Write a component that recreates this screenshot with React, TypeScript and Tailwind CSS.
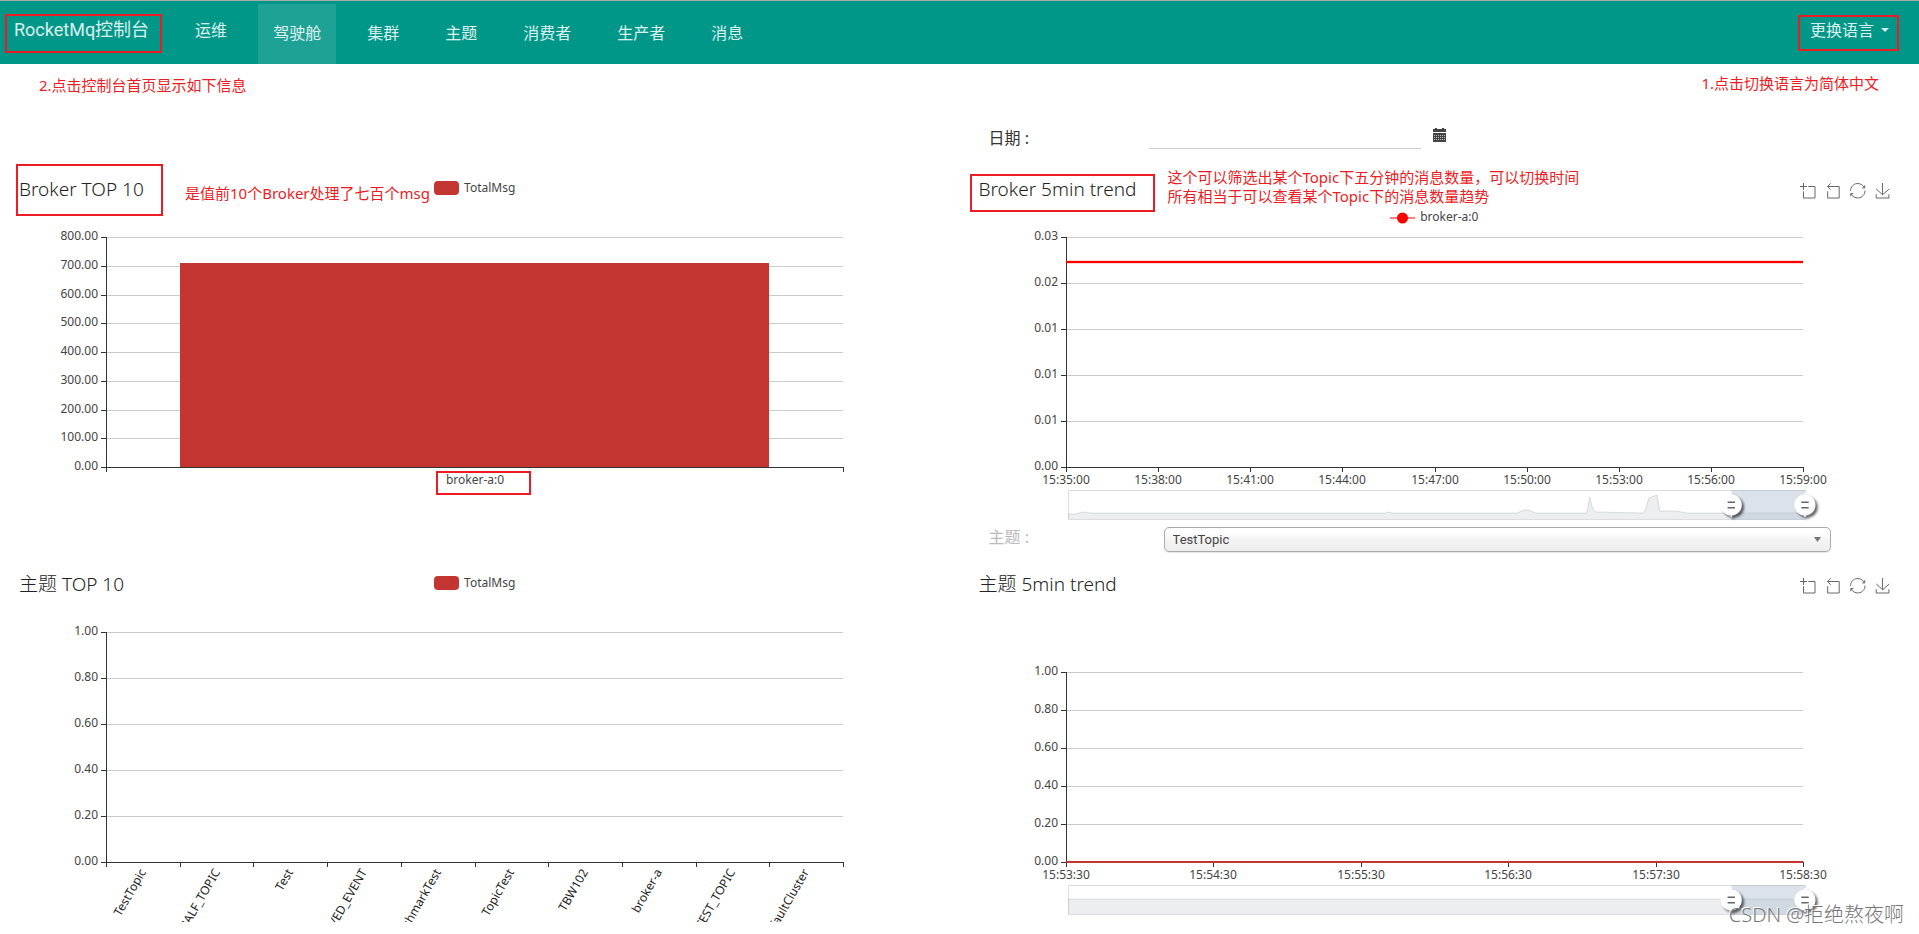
import React, { useLayoutEffect, useRef, useState } from "react";
import clsx from "clsx";

type Tick = { label: string; at: number };

type ChartProps = {
  title: string;
  legend?: React.ReactNode;
  legendLow?: boolean;
  toolbox?: boolean;
  yLabels: string[];
  xTicks: Tick[];
  top?: number;
  rotate?: boolean;
  tickMarks?: number[];
  bar?: { from: number; to: number; value: number };
  line?: { value: number; color: string; halo?: boolean };
  zoom?: number[][];
  children?: React.ReactNode;
};

const navItems = ["驾驶舱", "集群", "主题", "消费者", "生产者", "消息"];

const topics = [
  "TestTopic",
  "RMQ_SYS_TRANS_HALF_TOPIC",
  "Test",
  "OFFSET_MOVED_EVENT",
  "BenchmarkTest",
  "TopicTest",
  "TBW102",
  "broker-a",
  "SELF_TEST_TOPIC",
  "DefaultCluster",
];

const brokerTimes = [
  "15:35:00",
  "15:38:00",
  "15:41:00",
  "15:44:00",
  "15:47:00",
  "15:50:00",
  "15:53:00",
  "15:56:00",
  "15:59:00",
];

const topicTimes = [
  "15:53:30",
  "15:54:30",
  "15:55:30",
  "15:56:30",
  "15:57:30",
  "15:58:30",
];

// [position along the slider, height in px]
const brokerShadow = [
  [0, 5],
  [0.01, 5],
  [0.02, 7],
  [0.03, 6],
  [0.43, 6],
  [0.435, 7],
  [0.44, 6],
  [0.61, 6],
  [0.618, 9],
  [0.625, 9],
  [0.634, 6],
  [0.704, 6],
  [0.708, 22],
  [0.712, 10],
  [0.716, 7],
  [0.78, 6],
  [0.783, 8],
  [0.788, 21],
  [0.799, 24],
  [0.803, 8],
  [0.825, 8],
  [0.84, 6],
  [1, 6],
];

const topicShadow = [
  [0, 15],
  [1, 15],
];

const toolIcons = [
  {
    name: "区域缩放",
    d: "M0,13.5h26.9 M13.5,26.9V0 M32.1,13.5H58V58H13.5 V32.1",
  },
  {
    name: "区域缩放还原",
    d: "M22,1.4L9.9,13.5l12.3,12.3 M10.3,13.5H54.9v44.6 H10.3v-26",
  },
  {
    name: "还原",
    d: "M47,18.9h9.8V8.7 M56.3,20.1 C52.1,9,40.5,0.6,26.8,2.1C12.6,3.7,1.6,16.2,2.1,30.6 M13,41.1H3.1v10.2 M3.7,39.9c4.2,11.1,15.8,19.5,29.5,18 c14.2-1.6,25.2-14.1,24.7-28.5",
  },
  {
    name: "保存为图片",
    d: "M4.7,22.9L29.3,45.5L54.7,23.4M4.6,43.6L4.6,58L53.8,58L53.8,43.6M29.2,45.1L29.2,0",
  },
];

const spread = (labels: string[]): Tick[] =>
  labels.map((label, i) => ({ label, at: i / (labels.length - 1) }));

function useWidth() {
  const ref = useRef<HTMLDivElement>(null);
  const [width, setWidth] = useState(921);

  useLayoutEffect(() => {
    const el = ref.current;
    if (!el) return;
    const update = () => setWidth(Math.round(el.clientWidth));
    update();
    const observer = new ResizeObserver(update);
    observer.observe(el);
    return () => observer.disconnect();
  }, []);

  return { ref, width };
}

function Note({
  className,
  children,
}: {
  className?: string;
  children: React.ReactNode;
}) {
  return (
    <p
      className={clsx(
        "text-[15px] leading-[19px] whitespace-nowrap text-[#ed1c24]",
        className
      )}
    >
      {children}
    </p>
  );
}

function Frame({ className }: { className: string }) {
  return (
    <div
      className={clsx(
        "pointer-events-none absolute border-2 border-[#ed1c24]",
        className
      )}
    />
  );
}

function BarLegend() {
  return (
    <div className="flex items-center gap-[5px]">
      <span className="h-[14px] w-[25px] rounded-[4px] bg-[#c23531]" />
      <span className="text-xs leading-[14px] text-[#444]">TotalMsg</span>
    </div>
  );
}

function LineLegend() {
  return (
    <div className="flex items-center gap-[5px]">
      <svg width="25" height="14" viewBox="0 0 25 14">
        <path d="M0 8h25" stroke="#ff0000" strokeOpacity="0.5" strokeWidth="2" />
        <circle cx="12.5" cy="8" r="5.5" fill="#ff0000" />
      </svg>
      <span className="text-xs leading-[14px] text-[#444]">broker-a:0</span>
    </div>
  );
}

function ZoomHandle({ x, y }: { x: number; y: number }) {
  return (
    <g
      transform={`translate(${x} ${y}) scale(1.12) translate(-10 -21.3)`}
      className="drop-shadow-[2px_2px_1px_rgba(0,0,0,0.6)]"
    >
      <path
        d="M10.7,11.9v-1.3H9.3v1.3c-4.9,0.3-8.8,4.4-8.8,9.4c0,5,3.9,9.1,8.8,9.4v1.3h1.3v-1.3c4.9-0.3,8.8-4.4,8.8-9.4C19.5,16.3,15.6,12.2,10.7,11.9z"
        fill="#fff"
      />
      <path
        d="M13.3,24.4H6.7V23h6.6V24.4z M13.3,19.6H6.7v-1.4h6.6V19.6z"
        fill="#666"
      />
    </g>
  );
}

function DataZoom({
  left,
  width,
  shadow,
}: {
  left: number;
  width: number;
  shadow: number[][];
}) {
  const top = 263;
  const height = 29;
  const bottom = top + height;
  const start = left + width * 0.9;
  const outline = shadow
    .map(([at, h]) => `${left + at * width},${bottom - h}`)
    .join(" ");

  return (
    <g>
      <rect
        x={left + 0.5}
        y={top + 0.5}
        width={width}
        height={height}
        fill="#fff"
        stroke="#ddd"
      />
      <polygon
        points={`${left},${bottom} ${outline} ${left + width},${bottom}`}
        fill="#2f4554"
        fillOpacity="0.09"
      />
      <polyline
        points={outline}
        fill="none"
        stroke="#2f4554"
        strokeOpacity="0.15"
      />
      <rect
        x={start}
        y={top}
        width={width * 0.1}
        height={height + 1}
        fill="#a7b7cc"
        fillOpacity="0.4"
      />
      <ZoomHandle x={start} y={top + 15} />
      <ZoomHandle x={left + width} y={top + 15} />
    </g>
  );
}

function Chart({
  title,
  legend,
  legendLow,
  toolbox,
  yLabels,
  xTicks,
  top = 10,
  rotate,
  tickMarks,
  bar,
  line,
  zoom,
  children,
}: ChartProps) {
  const { ref, width } = useWidth();
  const left = Math.round(width * 0.1);
  const plotWidth = Math.floor(width * 0.8);
  const bottom = 240;
  const xOf = (at: number) => Math.round(left + at * plotWidth);
  const yOf = (v: number) => Math.round(bottom - v * (bottom - top));
  const marks = tickMarks ?? xTicks.map((t) => t.at);

  return (
    <section className="relative mr-6 ml-[14px] min-w-0">
      <header className="grid h-[50px] grid-cols-[1fr_auto_1fr] items-start px-[5px]">
        <h2 className="text-[19px] leading-6 font-light text-[#222]">{title}</h2>
        <div className={legendLow ? "pt-[33px]" : "pt-1"}>{legend}</div>
        {toolbox && (
          <div className="flex justify-end gap-[10px] pt-[6px]">
            {toolIcons.map((icon) => (
              <button key={icon.name} type="button" aria-label={icon.name}>
                <svg
                  className="size-[15px] overflow-visible"
                  viewBox="0 0 58 58"
                  fill="none"
                  stroke="#666"
                >
                  <path d={icon.d} vectorEffect="non-scaling-stroke" />
                </svg>
              </button>
            ))}
          </div>
        )}
      </header>
      <div ref={ref}>
        <svg
          width={width}
          height="300"
          className={clsx("block", !rotate && "overflow-visible")}
          role="img"
          aria-label={title}
        >
          {yLabels.map((label, i) => {
            const y = yOf(i / (yLabels.length - 1));
            return (
              <g key={i}>
                <rect x={left} y={y} width={plotWidth} height="1" fill="#ccc" />
                <rect x={left - 5} y={y} width="5" height="1" fill="#333" />
                <text
                  x={left - 8}
                  y={y + 3}
                  textAnchor="end"
                  className="fill-[#444] text-xs"
                >
                  {label}
                </text>
              </g>
            );
          })}
          {bar && (
            <rect
              x={xOf(bar.from)}
              y={yOf(bar.value)}
              width={xOf(bar.to) - xOf(bar.from)}
              height={bottom - yOf(bar.value)}
              fill="#c23531"
            />
          )}
          <rect x={left} y={bottom} width={plotWidth} height="1" fill="#333" />
          <rect x={left} y={top} width="1" height={bottom - top} fill="#333" />
          {marks.map((at) => (
            <rect
              key={at}
              x={xOf(at)}
              y={bottom}
              width="1"
              height="5"
              fill="#333"
            />
          ))}
          {xTicks.map((tick) =>
            rotate ? (
              <text
                key={tick.label}
                transform={`translate(${xOf(tick.at)} ${bottom + 8}) rotate(-60)`}
                y="4"
                textAnchor="end"
                className="fill-[#222] text-xs"
              >
                {tick.label}
              </text>
            ) : (
              <text
                key={tick.label}
                x={xOf(tick.at)}
                y={bottom + 17}
                textAnchor="middle"
                className="fill-[#444] text-xs"
              >
                {tick.label}
              </text>
            )
          )}
          {line && (
            <path
              d={`M${left} ${yOf(line.value)}h${plotWidth}`}
              stroke={line.color}
              strokeWidth="2"
            />
          )}
          {line?.halo && (
            <path
              d={`M${left} ${yOf(line.value)}h${plotWidth}`}
              stroke={line.color}
              strokeOpacity="0.3"
              strokeWidth="3"
            />
          )}
          {zoom && <DataZoom left={left + 2} width={plotWidth} shadow={zoom} />}
        </svg>
      </div>
      {children}
    </section>
  );
}

function Header() {
  return (
    <header className="relative flex h-16 items-start border-t border-[#aaa] bg-[#009688] text-base text-white/85">
      <a
        href="#/"
        className="ml-[14px] flex h-[58px] items-center font-['Roboto','Noto_Sans_CJK_SC',sans-serif] text-lg"
      >
        RocketMq控制台
      </a>
      <a href="#/ops" className="ml-[31px] flex h-[58px] items-center px-[15px]">
        运维
      </a>
      <nav className="ml-4 flex gap-4 self-end">
        {navItems.map((item, i) => (
          <a
            key={item}
            href={`#/${item}`}
            className={clsx(
              "flex h-[60px] items-center px-[15px] pb-[2px]",
              i === 0 && "bg-white/12"
            )}
          >
            {item}
          </a>
        ))}
      </nav>
      <button
        type="button"
        className="mr-[30px] ml-auto flex h-[58px] items-center gap-[7px]"
      >
        更换语言
        <svg width="8" height="4" viewBox="0 0 8 4" fill="currentColor">
          <path d="M0 0h8L4 4z" />
        </svg>
      </button>
      <Frame className="top-[13px] left-[5px] h-[39px] w-[157px]" />
      <Frame className="top-[14px] right-[20px] h-[36px] w-[101px]" />
    </header>
  );
}

function CalendarIcon() {
  return (
    <svg width="13" height="14" viewBox="0 0 13 14" fill="#444">
      <path d="M0 1h2V0h2v1h5V0h2v1h2v3H0z" />
      <path d="M0 5h13v9H0z" />
      <path
        d="M1 7.5h11M1 9.5h11M1 11.5h11"
        stroke="#bbb"
        strokeDasharray="1 1"
        strokeWidth="1"
      />
    </svg>
  );
}

export default function App() {
  const [date, setDate] = useState("");
  const [topic, setTopic] = useState("TestTopic");

  return (
    <div className="bg-white font-['Noto_Sans','Noto_Sans_CJK_SC',sans-serif]">
      <Header />
      <main className="relative grid grid-cols-2 pb-3">
        <div className="h-[113px] pt-3 pl-[39px]">
          <Note>2.点击控制台首页显示如下信息</Note>
        </div>
        <div className="relative flex h-[113px] items-start pt-[61px] pl-[29px]">
          <label
            htmlFor="date"
            className="w-[160px] text-base leading-[26px] text-[#333]"
          >
            日期 :
          </label>
          <input
            id="date"
            type="text"
            value={date}
            onChange={(e) => setDate(e.target.value)}
            className="h-6 w-[272px] border-b border-[#ccc] text-base outline-none"
          />
          <button type="button" aria-label="选择日期" className="ml-3 pt-[3px]">
            <CalendarIcon />
          </button>
          <Note className="absolute top-[10px] right-[40px]">
            1.点击切换语言为简体中文
          </Note>
        </div>

        <Chart
          title="Broker TOP 10"
          legend={<BarLegend />}
          yLabels={[
            "0.00",
            "100.00",
            "200.00",
            "300.00",
            "400.00",
            "500.00",
            "600.00",
            "700.00",
            "800.00",
          ]}
          xTicks={[{ label: "broker-a:0", at: 0.5 }]}
          tickMarks={[0, 1]}
          bar={{ from: 0.1, to: 0.9, value: 0.888 }}
        >
          <Frame className="top-[-13px] left-[2px] h-[52px] w-[147px]" />
          <Note className="absolute top-[7px] left-[171px]">
            是值前10个Broker处理了七百个msg
          </Note>
          <Frame className="top-[294px] left-[422px] h-[24px] w-[95px]" />
        </Chart>
        <Chart
          title="Broker 5min trend"
          legend={<LineLegend />}
          legendLow
          toolbox
          yLabels={["0.00", "0.01", "0.01", "0.01", "0.02", "0.03"]}
          xTicks={spread(brokerTimes)}
          line={{ value: 0.89, color: "#ff0000", halo: true }}
          zoom={brokerShadow}
        >
          <Frame className="top-[-3px] left-[-4px] h-[38px] w-[185px]" />
          <Note className="absolute top-[-9px] left-[194px]">
            这个可以筛选出某个Topic下五分钟的消息数量，可以切换时间
            <br />
            所有相当于可以查看某个Topic下的消息数量趋势
          </Note>
        </Chart>

        <div className="h-[45px]" />
        <div className="flex h-[45px] items-start pr-[88px] pl-[29px]">
          <label
            htmlFor="topic"
            className="w-[175px] text-base leading-5 text-[#bbb]"
          >
            主题 :
          </label>
          <div className="relative flex-1">
            <select
              id="topic"
              value={topic}
              onChange={(e) => setTopic(e.target.value)}
              className="block h-[25px] w-full appearance-none rounded-[5px] border border-[#aaa] bg-linear-to-b from-white from-20% via-[#f4f4f4] via-50% to-[#eee] px-2 font-['Roboto','Noto_Sans_CJK_SC',sans-serif] text-[13px] text-[#444] shadow-[0_1px_1px_rgba(0,0,0,0.1)] outline-none"
            >
              {topics.map((name) => (
                <option key={name} value={name}>
                  {name}
                </option>
              ))}
            </select>
            <svg
              className="pointer-events-none absolute top-[10px] right-[10px]"
              width="7"
              height="5"
              viewBox="0 0 7 5"
              fill="#777"
            >
              <path d="M0 0h7L3.5 5z" />
            </svg>
          </div>
        </div>

        <Chart
          title="主题 TOP 10"
          legend={<BarLegend />}
          yLabels={["0.00", "0.20", "0.40", "0.60", "0.80", "1.00"]}
          xTicks={topics.map((label, i) => ({ label, at: (i + 0.5) / 10 }))}
          tickMarks={[...topics.keys(), 10].map((i) => i / 10)}
          rotate
        />
        <Chart
          title="主题 5min trend"
          toolbox
          top={50}
          yLabels={["0.00", "0.20", "0.40", "0.60", "0.80", "1.00"]}
          xTicks={spread(topicTimes)}
          line={{ value: 0, color: "#c23531" }}
          zoom={topicShadow}
        />
        <span className="absolute right-[15px] bottom-[7px] text-xl leading-6 font-light text-[#777] [text-shadow:-1px_-1px_0_#fff]">
          CSDN @拒绝熬夜啊
        </span>
      </main>
    </div>
  );
}
